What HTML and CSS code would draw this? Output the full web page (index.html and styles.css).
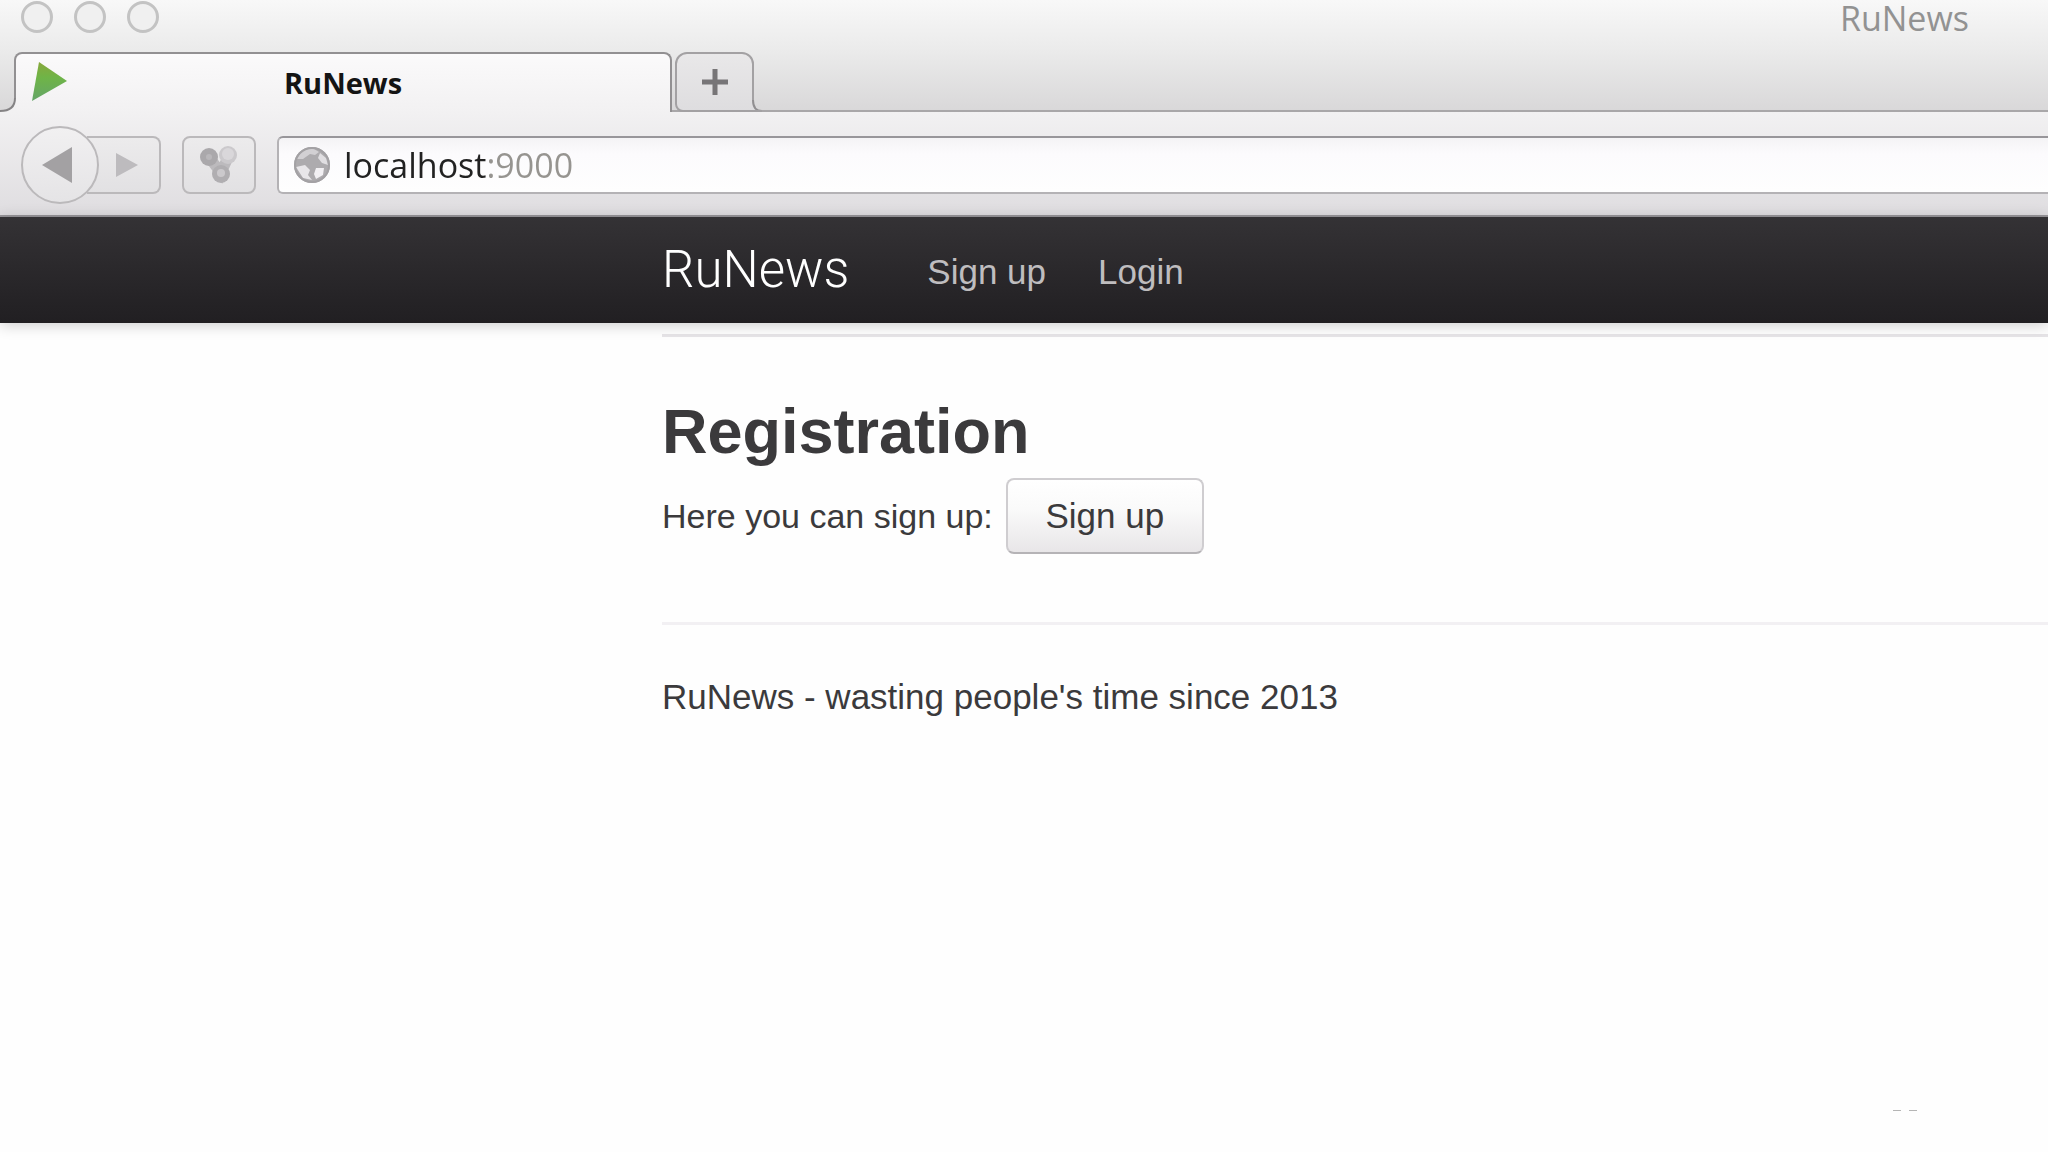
FILE: index.html
```
<!DOCTYPE html>
<html lang="en">
<head>
	<meta charset="UTF-8">
	<meta name="viewport" content="width=device-width, initial-scale=1">
	<title>RuNews</title>
	<link rel="stylesheet" href="styles.css">
</head>
<body>
	<div class="chrome">
		<div class="top">
			<div class="titlebar">
				<div class="lights">
					<button type="button" aria-label="Close"></button>
					<button type="button" aria-label="Minimize"></button>
					<button type="button" aria-label="Zoom"></button>
				</div>
				<span class="window-title">RuNews</span>
			</div>
			<div class="tabs">
				<div class="tab">
					<svg class="foot foot-left" width="16" height="14" viewBox="0 0 16 14">
						<path d="M15 0 C15 9 10 13 0 13 V14 H16 V0 Z" fill="#f2f1f2"/>
						<path d="M15 0 C15 9 10 13 0 13" fill="none" stroke="#858385" stroke-width="2"/>
					</svg>
					<svg class="favicon" width="40" height="44" viewBox="0 0 40 44">
						<defs>
							<linearGradient id="play" x1="0" y1="0" x2="0" y2="1">
								<stop offset="0" stop-color="#88a83c"/>
								<stop offset="0.4" stop-color="#6fb447"/>
								<stop offset="1" stop-color="#64a568"/>
							</linearGradient>
						</defs>
						<path d="M9 1 L37 20 L2 40 Z" fill="url(#play)"/>
					</svg>
					<span class="tab-title">RuNews</span>
				</div>
				<button type="button" class="new-tab" aria-label="New tab">
					<svg width="28" height="28" viewBox="0 0 28 28">
						<path d="M14 1 V27 M1 14 H27" stroke="#777577" stroke-width="5" fill="none"/>
					</svg>
					<svg class="foot foot-right" width="10" height="12" viewBox="0 0 10 12">
						<path d="M1 0 C1 7 4 11 10 11 V12 H0 V0 Z" fill="#dedddf"/>
						<path d="M1 0 C1 7 4 11 10 11" fill="none" stroke="#918f91" stroke-width="2"/>
						<path d="M0 11 H10" fill="none" stroke="#a3a1a3" stroke-width="2"/>
					</svg>
				</button>
			</div>
		</div>
		<div class="toolbar">
			<div class="history">
				<button type="button" class="back" aria-label="Back">
					<svg width="32" height="38" viewBox="0 0 32 38">
						<path d="M31 1 V37 L1 19 Z" fill="#a3a1a3"/>
					</svg>
				</button>
				<button type="button" class="forward" aria-label="Forward">
					<svg width="24" height="26" viewBox="0 0 24 26">
						<path d="M1 1 V25 L23 13 Z" fill="#bdbbbe"/>
					</svg>
				</button>
			</div>
			<button type="button" class="tool" aria-label="Bookmarks">
				<svg width="38" height="38" viewBox="0 0 38 38">
					<path d="M9 11 L21 27 L29 9" stroke="#bcbabd" stroke-width="11" fill="none"/>
					<circle cx="9" cy="11" r="9" fill="#aaa8ab"/>
					<circle cx="9" cy="11" r="3" fill="#b9b7ba"/>
					<circle cx="28" cy="9" r="9" fill="#cbc9cc"/>
					<circle cx="28" cy="8" r="6" fill="#d9d7da"/>
					<circle cx="21" cy="28" r="9" fill="#b0aeb1"/>
					<circle cx="21" cy="27" r="4" fill="#cbc9cc"/>
				</svg>
			</button>
			<div class="urlbar">
				<svg width="38" height="38" viewBox="0 0 38 38">
					<circle cx="19" cy="19" r="18" fill="#adabae"/>
					<path d="M8 6 Q14 2 21 3 L26 6 L22 9 L17 8 L10 13 L4 13 Z" fill="#d2d0d3"/>
					<path d="M27 7 L33 12 L35 19 L29 17 L25 12 Z" fill="#e0dee1"/>
					<path d="M3 21 L12 19 L17 24 L15 29 L19 34 L10 32 Z" fill="#e8e6e9"/>
					<path d="M23 22 L31 22 L30 29 L23 33 L21 28 Z" fill="#f2f0f3"/>
					<circle cx="19" cy="19" r="17" fill="none" stroke="#a3a1a4" stroke-width="2"/>
				</svg>
				<input type="text" class="url" aria-label="Address" value="localhost:9000">
			</div>
		</div>
	</div>

	<nav class="navbar">
		<a class="brand" href="#">RuNews</a>
		<a class="nav-link" href="#">Sign up</a>
		<a class="nav-link" href="#">Login</a>
	</nav>

	<main class="container">
		<hr class="first">
		<h1>Registration</h1>
		<div class="signup">
			<span class="hint">Here you can sign up:</span>
			<button type="button" class="btn">Sign up</button>
		</div>
		<hr>
		<footer>RuNews - wasting people's time since 2013</footer>
	</main>
	<div class="marks"><i></i><i></i></div>
</body>
</html>
```
FILE: styles.css
```
* {
	box-sizing: border-box;
}
body {
	margin: 0;
	background: #fefefe;
	color: #3b3a3c;
	font: 35px/52px "Liberation Sans", Arial, sans-serif;
}
button {
	padding: 0;
	font: inherit;
	color: inherit;
}
svg {
	display: block;
}

/* browser window */
.chrome {
	font-family: "Open Sans", "Noto Sans", sans-serif;
}
.top {
	height: 112px;
	background: linear-gradient(#f8f8f8, #ebebeb 45%, #d9d8d9);
	border-bottom: 2px solid #a9a7a9;
}
.titlebar {
	display: flex;
	justify-content: space-between;
	height: 52px;
	padding: 0 79px 0 21px;
}
.lights {
	display: flex;
	gap: 21px;
	padding-top: 1px;
}
.lights button {
	width: 32px;
	height: 32px;
	border: 3px solid #c3c3c3;
	border-radius: 50%;
	background: #f0f0f0;
}
.window-title {
	font-size: 34px;
	line-height: 36px;
	color: #929292;
}
.tabs {
	display: flex;
	gap: 3px;
	padding-left: 14px;
}
.tab {
	position: relative;
	display: grid;
	grid-template-columns: 1fr auto 1fr;
	align-items: center;
	width: 658px;
	height: 60px;
	padding: 0 14px;
	border: 2px solid #929092;
	border-bottom: 0;
	border-radius: 8px 8px 0 0;
	background: linear-gradient(#fbfafb, #f2f1f2);
}
.foot {
	position: absolute;
}
.foot-left {
	left: -16px;
	bottom: 0;
}
.foot-right {
	right: -10px;
	bottom: -2px;
}
.tab-title {
	font-size: 29px;
	font-weight: bold;
	line-height: 40px;
	color: #141414;
}
.new-tab {
	position: relative;
	display: flex;
	align-items: center;
	justify-content: center;
	width: 79px;
	height: 60px;
	border: 2px solid #a3a1a3;
	border-radius: 12px 12px 0 8px;
	background: linear-gradient(#e9e8e9, #dedddf);
}
.toolbar {
	display: flex;
	align-items: center;
	gap: 21px;
	height: 105px;
	padding: 2px 0 0 21px;
	background: linear-gradient(#f2f1f2, #dfdde0);
	border-bottom: 2px solid #98969a;
}
.history {
	display: flex;
	align-items: center;
}
.back {
	position: relative;
	display: flex;
	align-items: center;
	width: 78px;
	height: 78px;
	padding-left: 18px;
	border: 2px solid #bbb9bb;
	border-radius: 50%;
	background: linear-gradient(#f1f0f1, #e5e4e6);
}
.forward, .tool {
	display: flex;
	align-items: center;
	justify-content: center;
	width: 74px;
	height: 58px;
	border: 2px solid #bbb9bb;
	border-radius: 8px;
	background: linear-gradient(#ecebec, #e2e1e3);
}
.forward {
	margin-left: -12px;
	padding-left: 8px;
	border-left: 0;
	border-radius: 0 8px 8px 0;
}
.urlbar {
	display: flex;
	align-items: center;
	gap: 13px;
	flex: 1;
	height: 58px;
	padding-left: 14px;
	border: 2px solid #b4b2b5;
	border-top-color: #98969a;
	border-right: 0;
	border-radius: 6px 0 0 6px;
	background: linear-gradient(#f4f3f5, #fcfbfd 30%, #fefefe);
}
/* host is dark, port is grey */
.url {
	flex: 1;
	height: 52px;
	padding: 0;
	border: 0;
	outline: none;
	font: 34px/52px "Open Sans", "Noto Sans", sans-serif;
	color: #222;
	background: linear-gradient(90deg, #222 142px, #969490 142px);
	-webkit-background-clip: text;
	background-clip: text;
	-webkit-text-fill-color: transparent;
}

/* page */
.navbar {
	position: relative;
	display: flex;
	align-items: center;
	height: 106px;
	padding-left: 662px;
	background: linear-gradient(#343235, #211f22);
	box-shadow: 0 2px 14px rgba(0, 0, 0, 0.2);
}
.navbar a {
	text-decoration: none;
}
.brand {
	margin-right: 78px;
	font: 300 51px/96px Roboto, "Liberation Sans", sans-serif;
	color: #fff;
}
.nav-link {
	margin-right: 52px;
	padding-top: 4px;
	color: #bfbdbf;
}
.container {
	padding-left: 662px;
}
hr {
	height: 3px;
	margin: 0 0 46px;
	border: 0;
	background: #f2f0f3;
}
hr.first {
	margin: 11px 0 54px;
	background: #e6e4e7;
}
h1 {
	margin: 0;
	font-size: 63px;
	line-height: 80px;
}
.signup {
	display: flex;
	align-items: center;
	gap: 13px;
	margin: 7px 0 68px;
}
.hint {
	font-size: 34px;
}
.btn {
	width: 198px;
	height: 76px;
	border: 2px solid #cfcdd0;
	border-bottom-color: #b5b3b6;
	border-radius: 8px;
	background: linear-gradient(#fff, #fafafa 40%, #e8e6e8);
}
.marks {
	position: fixed;
	right: 131px;
	bottom: 41px;
	display: flex;
	gap: 8px;
}
.marks i {
	width: 8px;
	height: 1px;
	background: #b5b5b5;
}
```
